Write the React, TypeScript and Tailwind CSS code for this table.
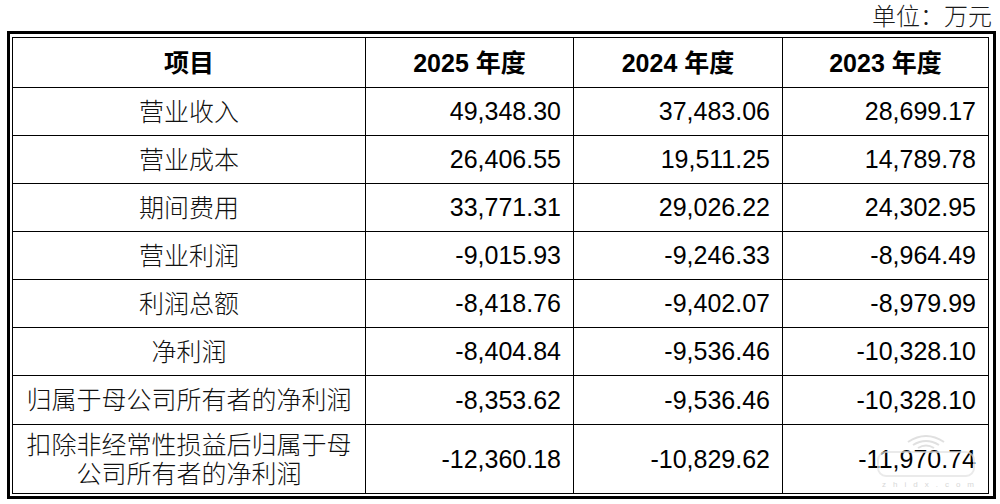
import React from "react";

const rows: { label: string[]; v: string[] }[] = [
  { label: ["营业收入"], v: ["49,348.30", "37,483.06", "28,699.17"] },
  { label: ["营业成本"], v: ["26,406.55", "19,511.25", "14,789.78"] },
  { label: ["期间费用"], v: ["33,771.31", "29,026.22", "24,302.95"] },
  { label: ["营业利润"], v: ["-9,015.93", "-9,246.33", "-8,964.49"] },
  { label: ["利润总额"], v: ["-8,418.76", "-9,402.07", "-8,979.99"] },
  { label: ["净利润"], v: ["-8,404.84", "-9,536.46", "-10,328.10"] },
  { label: ["归属于母公司所有者的净利润"], v: ["-8,353.62", "-9,536.46", "-10,328.10"] },
  {
    label: ["扣除非经常性损益后归属于母", "公司所有者的净利润"],
    v: ["-12,360.18", "-10,829.62", "-11,970.74"],
  },
];

const heights = ["h-[48px]", "h-[48px]", "h-[48px]", "h-[48px]", "h-[48px]", "h-[48px]", "h-[49px]", "h-[69px]"];

const font = "font-['Liberation_Sans','Noto_Sans_CJK_SC',sans-serif]";

export default function App() {
  return (
    <div className={`w-[1000px] h-[504px] bg-white text-black ${font} relative overflow-hidden`}>
      <div className="h-[31px] flex items-center justify-end pr-[8px] pt-[3px] text-[24px] leading-none text-[#1a1a1a] font-light">
        单位：万元
      </div>
      <div className="ml-[7px] w-[989px] border-[3px] border-black pt-[3px] pl-[2px] pr-[4px] pb-[2px]">
        <div className="w-[977px] border-t border-l border-black grid grid-cols-[353px_208px_209px_206px] text-[25px]">
          {/* header */}
          <div className="h-[50px] border-r border-b border-black flex items-center justify-center font-bold pt-[2px]">
            项目
          </div>
          {["2025", "2024", "2023"].map((y) => (
            <div
              key={y}
              className="h-[50px] border-r border-b border-black flex items-center justify-center font-bold pt-[2px]"
            >
              {y} 年度
            </div>
          ))}
          {rows.map((r, i) => (
            <React.Fragment key={i}>
              <div
                className={`${heights[i]} border-r border-b border-black flex flex-col items-center justify-center leading-[29px] pt-[1px] font-light text-[#111]`}
              >
                {r.label.map((l) => (
                  <span key={l}>{l}</span>
                ))}
              </div>
              {r.v.map((v, j) => (
                <div
                  key={j}
                  className={`${heights[i]} border-r border-b border-black flex items-center justify-end pr-[12px] pt-[1px]`}
                >
                  {v}
                </div>
              ))}
            </React.Fragment>
          ))}
        </div>
      </div>
      {/* watermark */}
      <div className="absolute left-[868px] top-[428px] w-[118px] h-[62px] pointer-events-none opacity-70">
        <svg width="118" height="62" viewBox="0 0 118 62" fill="none">
          <path d="M40 14 Q58 2 76 14" stroke="#d4d4d4" strokeWidth="2" />
          <path d="M45 17 Q58 9 71 17" stroke="#d4d4d4" strokeWidth="2" />
          <path d="M50 20 Q58 15 66 20" stroke="#d4d4d4" strokeWidth="2" />
          <rect x="10" y="24" width="96" height="24" rx="8" stroke="#e2e2e2" strokeWidth="2" />
          <text x="14" y="59" fontSize="8" fill="#c8c8c8" letterSpacing="7" fontFamily="Liberation Sans">
            zhidx.com
          </text>
        </svg>
      </div>
    </div>
  );
}
